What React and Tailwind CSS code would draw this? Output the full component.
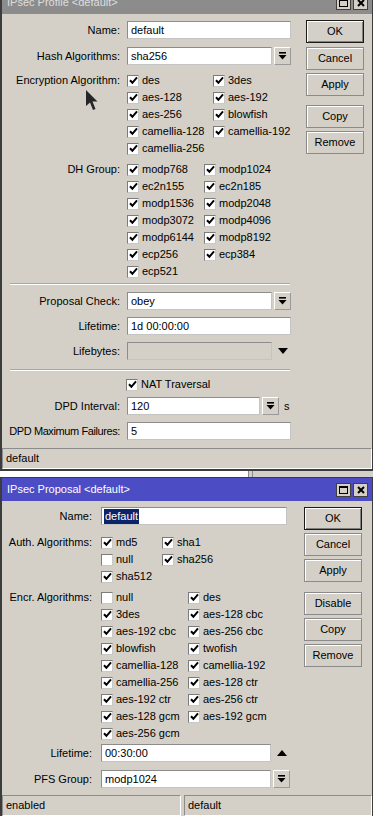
import React from "react";

// ─────────────────────────────────────────────
// Small pieces
// ─────────────────────────────────────────────
function Check({ on = true }) {
  return (
    <span className="w-[12px] h-[12px] bg-white border border-t-[#7c7c7c] border-l-[#7c7c7c] border-r-[#c8c8c8] border-b-[#c8c8c8] flex items-center justify-center shrink-0">
      {on && (
        <svg width="9" height="9" viewBox="0 0 9 9">
          <path d="M1 4.2 L3.4 6.8 L8 1.4" stroke="#000" strokeWidth="2" fill="none" />
        </svg>
      )}
    </span>
  );
}

function CheckItem({ label, on = true }) {
  return (
    <div className="flex items-center gap-[3px] h-[17px] whitespace-nowrap">
      <Check on={on} />
      <span>{label}</span>
    </div>
  );
}

function DropGlyph() {
  return (
    <svg width="9" height="8" viewBox="0 0 9 8">
      <rect x="1" y="0" width="7" height="1.6" fill="#000" />
      <path d="M0.5 3 H8.5 L4.5 7.5 Z" fill="#000" />
    </svg>
  );
}

function DropButton() {
  return (
    <div className="w-[17px] h-[18px] ml-[2px] border border-t-[#ffffff] border-l-[#ffffff] border-r-[#9a9a9a] border-b-[#9a9a9a] flex items-center justify-center shrink-0">
      <DropGlyph />
    </div>
  );
}

function Input({ value, width, selected, disabled }) {
  return (
    <div
      className={`h-[18px] border border-t-[#8c8c8c] border-l-[#8c8c8c] border-r-[#c4c4c4] border-b-[#c4c4c4] flex items-center px-[3px] shrink-0 ${disabled ? "bg-[#d4d0c8]" : "bg-white"}`}
      style={{ width }}
    >
      {selected ? (
        <span className="bg-[#0a246a] text-white px-[1px] -ml-[1px] leading-[15px]">{value}</span>
      ) : (
        value
      )}
    </div>
  );
}

function Row({ label, labelW, gap, children, className = "", labelClass = "" }) {
  return (
    <div className={`flex items-center ${className}`}>
      <div className={`text-right whitespace-nowrap shrink-0 ${labelClass}`} style={{ width: labelW }}>
        {label}
      </div>
      <div className="flex items-center" style={{ marginLeft: gap }}>
        {children}
      </div>
    </div>
  );
}

function CheckGrid({ label, labelW, gap, col1, items, className = "" }) {
  return (
    <div className={`flex ${className}`}>
      <div className="text-right whitespace-nowrap shrink-0 h-[17px] leading-[17px]" style={{ width: labelW }}>
        {label}
      </div>
      <div className="grid" style={{ marginLeft: gap, gridTemplateColumns: `${col1}px auto` }}>
        {items.map((it, i) =>
          it ? <CheckItem key={i} label={it[0]} on={it[1]} /> : <div key={i} />
        )}
      </div>
    </div>
  );
}

function Btn({ children, primary, className = "" }) {
  return (
    <div
      className={`h-[23px] w-[58px] flex items-center justify-center ${primary ? "border border-[#1a1a1a] shadow-[inset_1px_1px_0_#ffffff,inset_-1px_-1px_0_#808080]" : "border border-[#8a8a8a] shadow-[inset_1px_1px_0_#ffffff]"} ${className}`}
    >
      {children}
    </div>
  );
}

function TitleBar({ title, bg, color, className = "" }) {
  return (
    <div className={`h-[23px] flex items-center justify-between pl-[5px] pr-[4px] ${bg} ${className}`}>
      <span className={`text-[11px] ${color}`}>{title}</span>
      <div className="flex gap-[2px]">
        <div className="w-[15px] h-[14px] bg-[#d4d0c8] border border-[#404040] flex items-center justify-center">
          <div className="w-[9px] h-[8px] border border-black border-t-2" />
        </div>
        <div className="w-[15px] h-[14px] bg-[#d4d0c8] border border-[#404040] flex items-center justify-center">
          <svg width="8" height="8" viewBox="0 0 8 8">
            <path d="M1 1 L7 7 M7 1 L1 7" stroke="#000" strokeWidth="2" />
          </svg>
        </div>
      </div>
    </div>
  );
}

function Separator({ className = "" }) {
  return <div className={`h-[2px] ml-[8px] w-[280px] border-t border-[#a8a8a8] border-b border-b-white ${className}`} />;
}

// ─────────────────────────────────────────────
// Windows
// ─────────────────────────────────────────────
function ProfileWindow() {
  const L = 118;
  const G = 7;
  return (
    <div className="border-l-2 border-r border-b-2 border-[#3c3c3c]">
      <TitleBar title="IPsec Profile <default>" bg="bg-[#8c8c8c]" color="text-[#dedede]" className="-mt-[9px]" />
      <div className="flex">
        <div className="w-[304px]">
          <Row label="Name:" labelW={L} gap={G} className="mt-[7px]">
            <Input value="default" width={164} />
          </Row>
          <Row label="Hash Algorithms:" labelW={L} gap={G} className="mt-[8px]">
            <Input value="sha256" width={145} />
            <DropButton />
          </Row>
          <CheckGrid
            className="mt-[7px]"
            label="Encryption Algorithm:"
            labelW={L}
            gap={G}
            col1={86}
            items={[
              ["des", true], ["3des", true],
              ["aes-128", true], ["aes-192", true],
              ["aes-256", true], ["blowfish", true],
              ["camellia-128", true], ["camellia-192", true],
              ["camellia-256", true], null,
            ]}
          />
          <CheckGrid
            className="mt-[4px]"
            label="DH Group:"
            labelW={L}
            gap={G}
            col1={77}
            items={[
              ["modp768", true], ["modp1024", true],
              ["ec2n155", true], ["ec2n185", true],
              ["modp1536", true], ["modp2048", true],
              ["modp3072", true], ["modp4096", true],
              ["modp6144", true], ["modp8192", true],
              ["ecp256", true], ["ecp384", true],
              ["ecp521", true], null,
            ]}
          />
          <Separator className="mt-[3px]" />
          <Row label="Proposal Check:" labelW={L} gap={G} className="mt-[7px]">
            <Input value="obey" width={145} />
            <DropButton />
          </Row>
          <Row label="Lifetime:" labelW={L} gap={G} className="mt-[7px]">
            <Input value="1d 00:00:00" width={164} />
          </Row>
          <Row label="Lifebytes:" labelW={L} gap={G} className="mt-[7px]">
            <Input value="" width={145} disabled />
            <div className="ml-[5px] w-[12px] flex justify-center">
              <svg width="10" height="6" viewBox="0 0 10 6">
                <path d="M0 0 H10 L5 6 Z" fill="#000" />
              </svg>
            </div>
          </Row>
          <Separator className="mt-[9px]" />
          <div className="mt-[5px] flex" style={{ marginLeft: L + G - 1 }}>
            <CheckItem label="NAT Traversal" />
          </div>
          <Row label="DPD Interval:" labelW={L} gap={G} className="mt-[4px]">
            <Input value="120" width={133} />
            <DropButton />
            <span className="ml-[5px]">s</span>
          </Row>
          <Row label="DPD Maximum Failures:" labelW={L} gap={G} className="mt-[7px]" labelClass="tracking-[-0.4px]">
            <Input value="5" width={164} />
          </Row>
        </div>
        <div className="flex flex-col">
          <Btn primary className="mt-[6px]">OK</Btn>
          <Btn className="mt-[4px]">Cancel</Btn>
          <Btn className="mt-[3px]">Apply</Btn>
          <Btn className="mt-[9px]">Copy</Btn>
          <Btn className="mt-[3px]">Remove</Btn>
        </div>
      </div>
      <div className="mt-[8px] h-[21px] border border-t-[#8c8c8c] border-l-[#8c8c8c] border-r-white border-b-white flex items-center pl-[3px]">
        default
      </div>
    </div>
  );
}

function ProposalWindow() {
  const L = 90;
  const G = 9;
  return (
    <div className="border-l-2 border-r border-t border-[#3c3c3c]">
      <TitleBar title="IPsec Proposal <default>" bg="bg-[#4c4cc4]" color="text-white" />
      <div className="flex">
        <div className="w-[302px]">
          <Row label="Name:" labelW={L} gap={G} className="mt-[6px]">
            <Input value="default" width={186} selected />
          </Row>
          <CheckGrid
            className="mt-[9px]"
            label="Auth. Algorithms:"
            labelW={L}
            gap={G}
            col1={61}
            items={[
              ["md5", true], ["sha1", true],
              ["null", false], ["sha256", true],
              ["sha512", true], null,
            ]}
          />
          <CheckGrid
            className="mt-[4px]"
            label="Encr. Algorithms:"
            labelW={L}
            gap={G}
            col1={87}
            items={[
              ["null", false], ["des", true],
              ["3des", true], ["aes-128 cbc", true],
              ["aes-192 cbc", true], ["aes-256 cbc", true],
              ["blowfish", true], ["twofish", true],
              ["camellia-128", true], ["camellia-192", true],
              ["camellia-256", true], ["aes-128 ctr", true],
              ["aes-192 ctr", true], ["aes-256 ctr", true],
              ["aes-128 gcm", true], ["aes-192 gcm", true],
              ["aes-256 gcm", true], null,
            ]}
          />
          <Row label="Lifetime:" labelW={L} gap={G} className="mt-[2px]">
            <Input value="00:30:00" width={170} />
            <div className="ml-[5px] w-[12px] flex justify-center">
              <svg width="10" height="6" viewBox="0 0 10 6">
                <path d="M0 6 H10 L5 0 Z" fill="#000" />
              </svg>
            </div>
          </Row>
          <Row label="PFS Group:" labelW={L} gap={G} className="mt-[8px]">
            <Input value="modp1024" width={170} />
            <DropButton />
          </Row>
        </div>
        <div className="flex flex-col">
          <Btn primary className="mt-[6px]">OK</Btn>
          <Btn className="mt-[3px]">Cancel</Btn>
          <Btn className="mt-[3px]">Apply</Btn>
          <Btn className="mt-[10px]">Disable</Btn>
          <Btn className="mt-[3px]">Copy</Btn>
          <Btn className="mt-[3px]">Remove</Btn>
        </div>
      </div>
      <div className="mt-[7px] h-[21px] flex gap-[3px]">
        <div className="w-[179px] border border-t-[#8c8c8c] border-l-[#8c8c8c] border-r-white border-b-white flex items-center pl-[3px]">
          enabled
        </div>
        <div className="flex-1 border border-t-[#8c8c8c] border-l-[#8c8c8c] border-r-white border-b-white flex items-center pl-[3px]">
          default
        </div>
      </div>
    </div>
  );
}

export default function App() {
  return (
    <div className="relative w-[373px] h-[816px] overflow-hidden bg-[#d4d0c8] text-[11px] text-black font-['Liberation_Sans',Arial,sans-serif] leading-none">
      <ProfileWindow />
      <div className="h-[6px] flex">
        <div className="w-[248px] bg-white" />
        <div className="w-[5px] border-l border-r border-[#8c8c8c] bg-[#d4d0c8]" />
        <div className="flex-1 bg-[#d4d0c8]" />
      </div>
      <ProposalWindow />
      {/* mouse pointer */}
      <svg className="absolute left-[86px] top-[90px]" width="12" height="21" viewBox="0 0 12 21">
        <path d="M0 0 L0 16 L4 12.5 L7 20 L9.5 19 L6.5 11.5 L11.5 11.5 Z" fill="#262626" />
      </svg>
    </div>
  );
}
